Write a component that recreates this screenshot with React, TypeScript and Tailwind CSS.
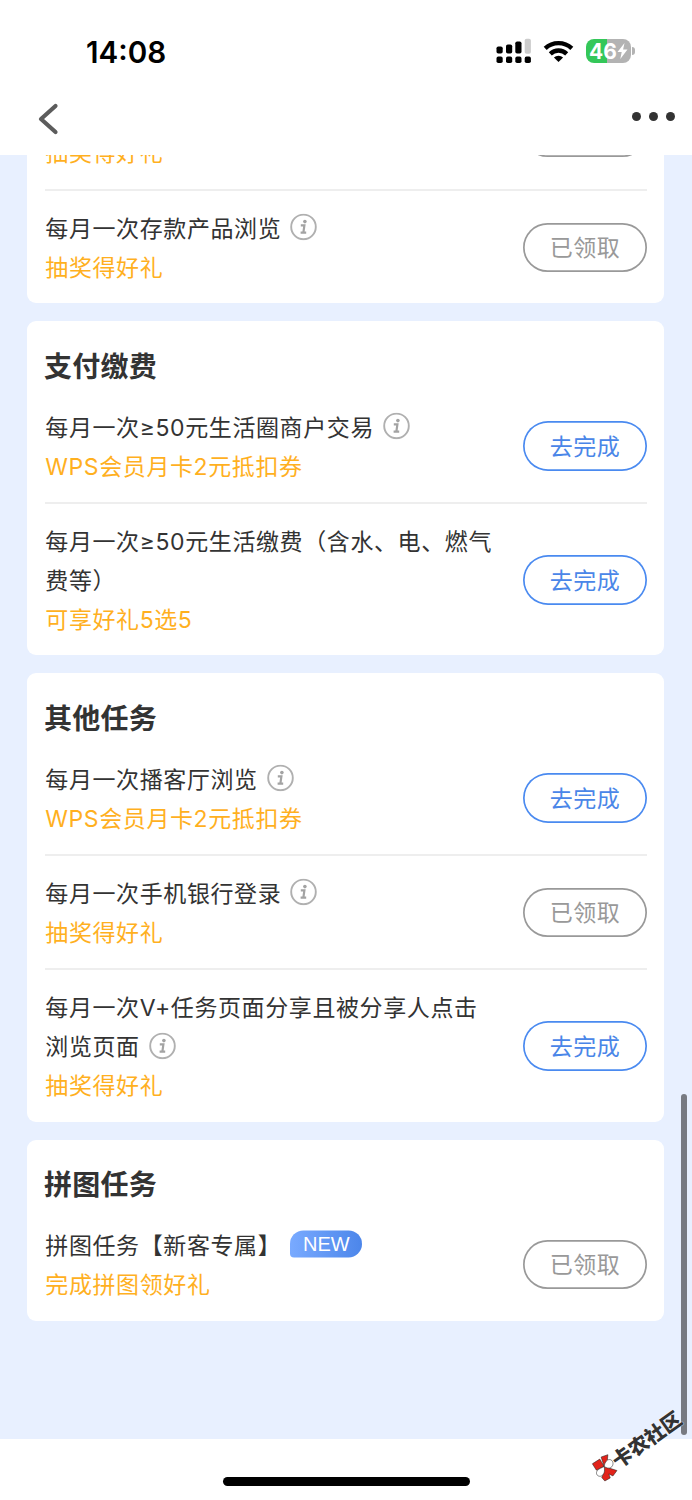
import type { ReactNode } from "react";

type Task = {
  title: string;
  reward: string;
  done?: boolean;
  info?: boolean;
  isNew?: boolean;
};

type TaskGroup = {
  heading?: string;
  tasks: Task[];
};

const groups: TaskGroup[] = [
  {
    tasks: [{ title: "每月一次存款产品浏览", reward: "抽奖得好礼", done: true, info: true }],
  },
  {
    heading: "支付缴费",
    tasks: [
      { title: "每月一次≥50元生活圈商户交易", reward: "WPS会员月卡2元抵扣券", info: true },
      { title: "每月一次≥50元生活缴费（含水、电、燃气费等）", reward: "可享好礼5选5" },
    ],
  },
  {
    heading: "其他任务",
    tasks: [
      { title: "每月一次播客厅浏览", reward: "WPS会员月卡2元抵扣券", info: true },
      { title: "每月一次手机银行登录", reward: "抽奖得好礼", done: true, info: true },
      { title: "每月一次V+任务页面分享且被分享人点击浏览页面", reward: "抽奖得好礼", info: true },
    ],
  },
  {
    heading: "拼图任务",
    tasks: [{ title: "拼图任务【新客专属】", reward: "完成拼图领好礼", done: true, isNew: true }],
  },
];

function InfoIcon() {
  return (
    <svg
      className="ml-[9px] inline-block size-[27px] -translate-y-[3.6px] align-middle"
      viewBox="0 0 27 27"
      fill="none"
    >
      <circle cx="13.5" cy="13.5" r="12.3" stroke="#b0b0b0" strokeWidth="1.9" />
      <circle cx="14.9" cy="8.2" r="1.8" fill="#a3a3a3" />
      <path d="M10.8 12h3.6l-1 7M10.6 19.2h5.6" stroke="#a3a3a3" strokeWidth="2.2" />
    </svg>
  );
}

function NewBadge() {
  return (
    <span className="ml-[9px] inline-flex h-[27px] w-[72px] -translate-y-[3.6px] items-center justify-center rounded-[13.5px] rounded-bl-[4px] bg-linear-to-r from-[#79aaff] to-[#4c86ea] align-middle font-['Liberation_Sans',sans-serif] text-[20px] leading-none tracking-normal text-white">
      NEW
    </span>
  );
}

function StatusBar() {
  return (
    <div className="flex h-[84px] items-start justify-between pl-[86px] pr-[57px]">
      <span className="mt-[33px] text-[29.6px] leading-[38px] font-semibold text-black">14:08</span>
      <div className="mt-[38px] flex items-center">
        <svg className="h-[26px] w-[36px]" viewBox="0 0 36 26">
          <rect x="0.5" y="8.5" width="6.2" height="7" rx="1.8" />
          <rect x="10" y="6.5" width="6.2" height="9" rx="1.8" />
          <rect x="19.3" y="3.5" width="6.2" height="12" rx="1.8" />
          <rect x="28.7" y="0.7" width="6.2" height="15" rx="1.8" fill="#ccc" />
          <rect x="0.5" y="18.6" width="6.2" height="6.5" rx="1.8" />
          <rect x="10" y="18.6" width="6.2" height="6.5" rx="1.8" />
          <rect x="19.3" y="18.6" width="6.2" height="6.5" rx="1.8" />
          <rect x="28.7" y="18.6" width="6.2" height="6.5" rx="1.8" />
        </svg>
        <svg className="ml-[11px] h-[24px] w-[31px]" viewBox="0 0 31 24" fill="none" stroke="#000" strokeWidth="4.4">
          <path d="M2.2 9.4a19.5 19.5 0 0 1 26.6 0" />
          <path d="M7.3 14.8a12 12 0 0 1 16.4 0" />
          <path d="M15.5 23l-4.6-4.4a6.5 6.5 0 0 1 9.2 0z" fill="#000" stroke="none" />
        </svg>
        <div className="ml-[12px] flex h-[24px] w-[45px] items-center justify-center rounded-[8px] bg-[linear-gradient(90deg,#34c759_47%,#b3b3b3_47%)]">
          <span className="text-[21px] leading-none font-bold text-white">46</span>
          <svg className="h-[16px] w-[11px]" viewBox="0 0 10 16" fill="#fff">
            <path d="M7 0L0 9h4.2L2.8 16 10 6.6H5.6z" />
          </svg>
        </div>
        <span className="ml-[1px] h-[8px] w-[3px] rounded-r-full bg-[#b3b3b3]" />
      </div>
    </div>
  );
}

function NavBar() {
  return (
    <div className="flex h-[71px] items-start justify-between pl-[37px] pr-[17.5px]">
      <svg className="mt-[19px] h-[32px] w-[22px]" viewBox="0 0 22 32" fill="none">
        <path d="M18.5 3L4 16l14.5 13" stroke="#5c5c5c" strokeWidth="4.2" strokeLinecap="round" strokeLinejoin="round" />
      </svg>
      <div className="mt-[28px] flex gap-2">
        <i className="size-[9px] rounded-full bg-[#333]" />
        <i className="size-[9px] rounded-full bg-[#333]" />
        <i className="size-[9px] rounded-full bg-[#333]" />
      </div>
    </div>
  );
}

function ActionButton({ done }: { done?: boolean }) {
  const color = done
    ? "text-[#999] shadow-[inset_0_0_0_1.7px_#999]"
    : "text-[#4a86e8] shadow-[inset_0_0_0_1.7px_#4a8af0]";
  return (
    <button
      className={`-mt-[3.4px] h-[49.4px] w-[124px] shrink-0 rounded-full pt-[2.4px] text-[23px] leading-none tracking-[0.5px] ${color}`}
    >
      {done ? "已领取" : "去完成"}
    </button>
  );
}

function TaskRow({ task }: { task: Task }) {
  return (
    <li className="flex items-center justify-between border-t-2 border-[#eee] pt-[18.9px] pb-[15.4px] first:border-t-0 first:pt-0">
      <div className="w-[452px] text-[23px] leading-[39px] tracking-[0.6px] text-[#333]">
        <p>
          {task.title}
          {task.info && <InfoIcon />}
          {task.isNew && <NewBadge />}
        </p>
        <p className="text-[#ffb01f]">{task.reward}</p>
      </div>
      <ActionButton done={task.done} />
    </li>
  );
}

// tail of the row that has scrolled under the nav bar
function ScrolledRow() {
  return (
    <div className="mb-[19px] flex h-[95.6px] items-end justify-between border-b-2 border-[#eee] pb-4">
      <p className="text-[23px] leading-[39px] tracking-[0.6px] text-[#ffb01f]">抽奖得好礼</p>
      <span className="mb-[16px] h-[49.4px] w-[124px] rounded-full shadow-[inset_0_0_0_1.7px_#999]" />
    </div>
  );
}

function Card({ children }: { children: ReactNode }) {
  return <section className="mb-[18px] rounded-[9px] bg-white pr-[17px] pl-[17.9px]">{children}</section>;
}

function Watermark() {
  return (
    <>
      <svg className="absolute top-[1453px] left-[591px] h-[29px] w-[27px]" viewBox="18 160 80 86" stroke="#222" strokeWidth="1.6">
        <path d="M22 192L44 178l13 22-23 11z" fill="#e2231a" />
        <path d="M48 172l20-7-2 22-9 13z" fill="#e2231a" />
        <path d="M57 200l38 12-12 16-12-6 4 12-16 9-9-10 6-17z" fill="#e2231a" />
        <path d="M57 200c2-14 10-23 19-20 10 4 9 18 1 23-6 4-13 1-20-3z" fill="#fff" />
        <path d="M57 200c3 14 0 26-11 29-11 1-15-10-9-17 5-6 13-8 20-12z" fill="#fff" />
      </svg>
      <span className="absolute top-[1430px] left-[607px] -rotate-[35.5deg] text-[20px] leading-[20px] font-black whitespace-nowrap text-[#333] [text-shadow:0_0_1px_#fff,0_0_1px_#fff]">
        卡农社区
      </span>
    </>
  );
}

export default function App() {
  return (
    <div className="relative h-[1500px] w-[692px] overflow-hidden bg-white font-[Inter,'Noto_Sans_CJK_SC',sans-serif]">
      <StatusBar />
      <NavBar />
      <main className="h-[1284px] overflow-hidden bg-[#e8f0ff] pr-[28px] pl-[27.4px]">
        <div className="-mt-[59.6px]">
          {groups.map((group, i) => (
            <Card key={i}>
              {group.heading ? (
                <h2 className="-ml-[1.2px] pt-[25.7px] pb-[21.7px] text-[28px] leading-[40px] font-bold tracking-[0.2px] text-[#333]">
                  {group.heading}
                </h2>
              ) : (
                <ScrolledRow />
              )}
              <ul>
                {group.tasks.map((task) => (
                  <TaskRow key={task.title} task={task} />
                ))}
              </ul>
            </Card>
          ))}
        </div>
      </main>
      <div className="mx-auto mt-[38px] h-[9px] w-[247px] rounded-full bg-black" />
      <div className="absolute top-[1094px] right-[5px] h-[341px] w-[6px] rounded-full bg-[#777a82]" />
      <Watermark />
    </div>
  );
}
